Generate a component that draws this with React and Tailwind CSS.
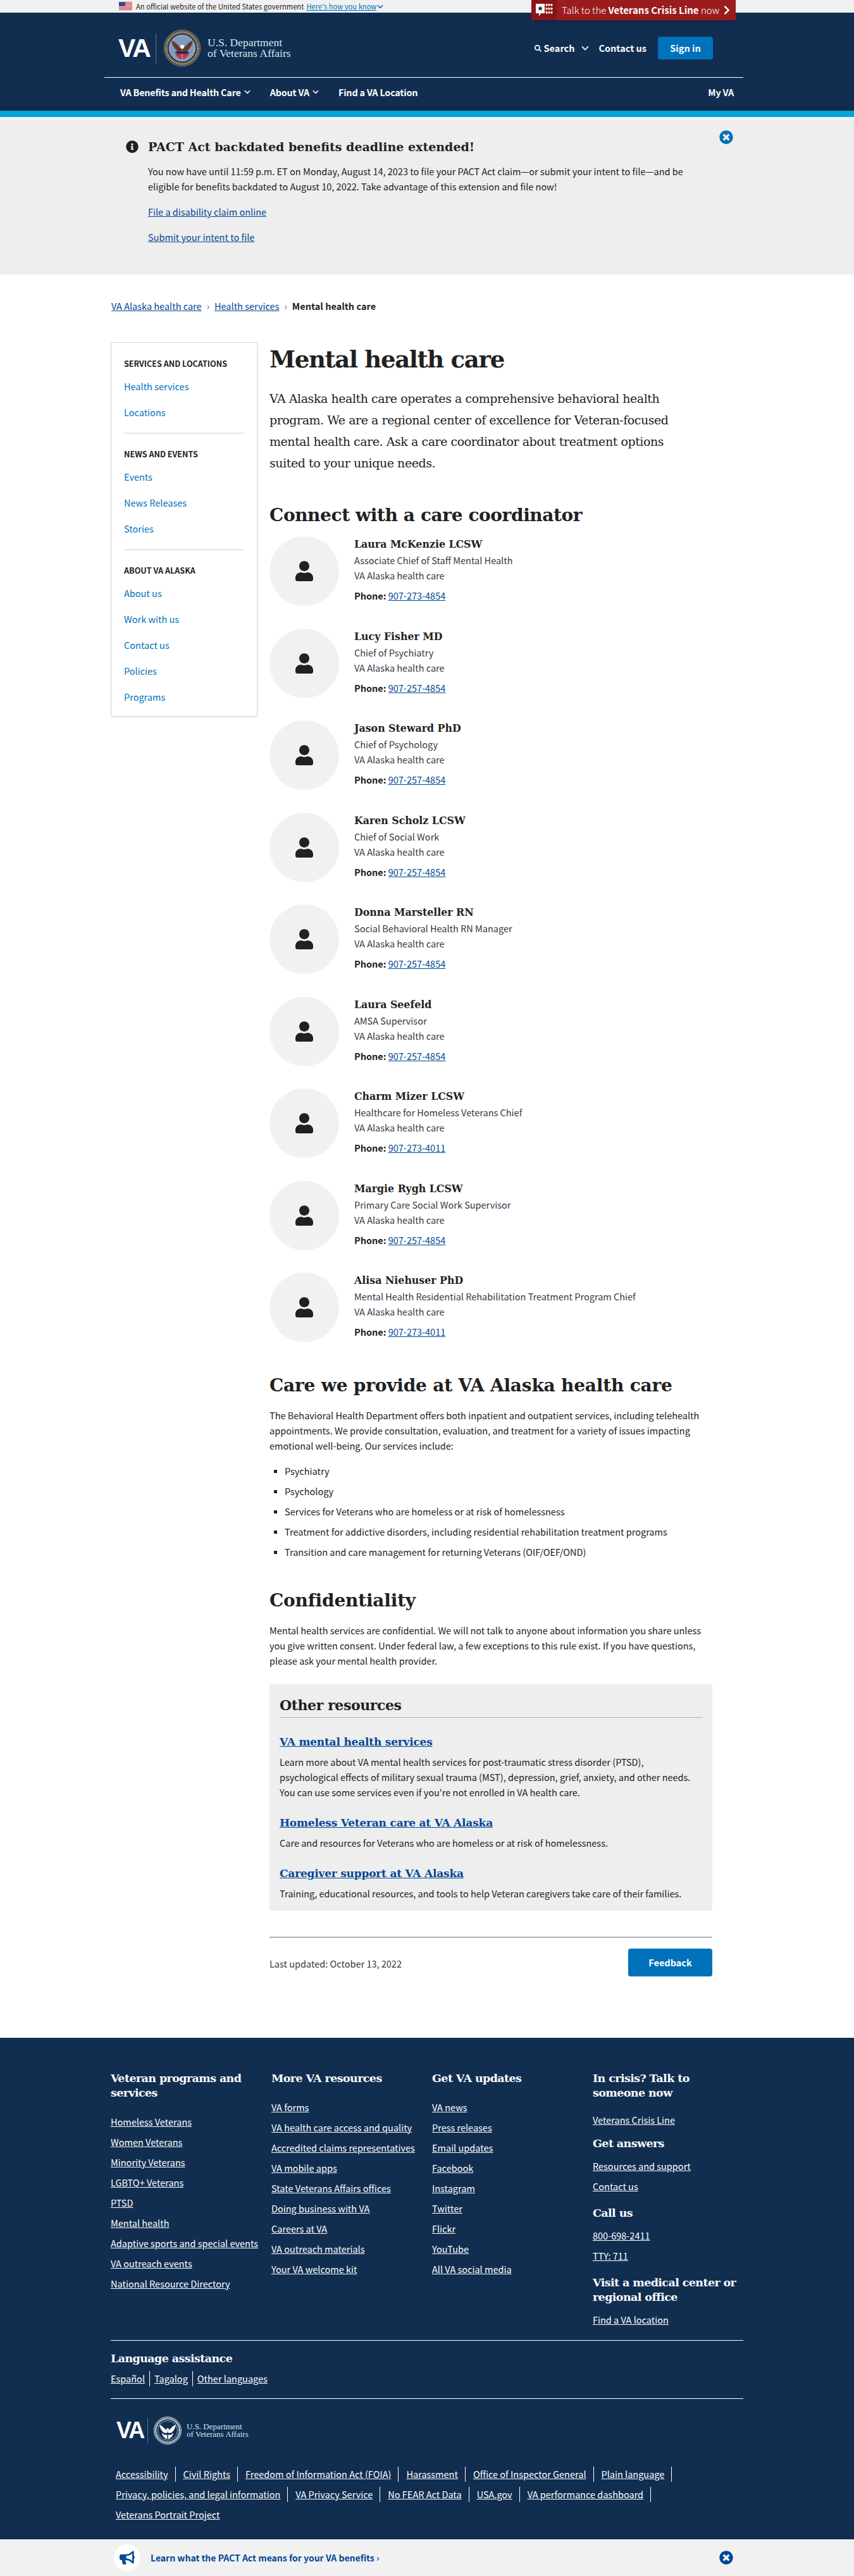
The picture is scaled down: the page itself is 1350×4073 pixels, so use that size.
import React from 'react';
import { FaUser, FaBullhorn, FaInfoCircle, FaTimesCircle, FaChevronRight, FaSearch } from 'react-icons/fa';

const sans = 'font-["Noto_Sans_CJK_SC","Source_Sans_Pro",Lato,sans-serif]';
const slab = 'font-["DejaVu_Serif",serif]';

const coordinators = [
  ['Laura McKenzie LCSW', 'Associate Chief of Staff Mental Health', '907-273-4854'],
  ['Lucy Fisher MD', 'Chief of Psychiatry', '907-257-4854'],
  ['Jason Steward PhD', 'Chief of Psychology', '907-257-4854'],
  ['Karen Scholz LCSW', 'Chief of Social Work', '907-257-4854'],
  ['Donna Marsteller RN', 'Social Behavioral Health RN Manager', '907-257-4854'],
  ['Laura Seefeld', 'AMSA Supervisor', '907-257-4854'],
  ['Charm Mizer LCSW', 'Healthcare for Homeless Veterans Chief', '907-273-4011'],
  ['Margie Rygh LCSW', 'Primary Care Social Work Supervisor', '907-257-4854'],
  ['Alisa Niehuser PhD', 'Mental Health Residential Rehabilitation Treatment Program Chief', '907-273-4011'],
];

const sideNav = [
  ['SERVICES AND LOCATIONS', ['Health services', 'Locations']],
  ['NEWS AND EVENTS', ['Events', 'News Releases', 'Stories']],
  ['ABOUT VA ALASKA', ['About us', 'Work with us', 'Contact us', 'Policies', 'Programs']],
];

const footerCols = [
  ['Veteran programs and services', ['Homeless Veterans', 'Women Veterans', 'Minority Veterans', 'LGBTQ+ Veterans', 'PTSD', 'Mental health', 'Adaptive sports and special events', 'VA outreach events', 'National Resource Directory']],
  ['More VA resources', ['VA forms', 'VA health care access and quality', 'Accredited claims representatives', 'VA mobile apps', 'State Veterans Affairs offices', 'Doing business with VA', 'Careers at VA', 'VA outreach materials', 'Your VA welcome kit']],
  ['Get VA updates', ['VA news', 'Press releases', 'Email updates', 'Facebook', 'Instagram', 'Twitter', 'Flickr', 'YouTube', 'All VA social media']],
];

const legalRows = [
  ['Accessibility', 'Civil Rights', 'Freedom of Information Act (FOIA)', 'Harassment', 'Office of Inspector General', 'Plain language'],
  ['Privacy, policies, and legal information', 'VA Privacy Service', 'No FEAR Act Data', 'USA.gov', 'VA performance dashboard'],
];

function Chevron({ className }) {
  return (
    <svg viewBox="0 0 12 8" fill="none" stroke="currentColor" strokeWidth="2" className={className}>
      <path d="M1 1.5 L6 6.5 L11 1.5" />
    </svg>
  );
}

function Flag() {
  return (
    <svg width="21" height="14" viewBox="0 0 21 14">
      <rect width="21" height="14" fill="#fff" />
      {[0, 2, 4, 6, 8, 10, 12].map((y) => <rect key={y} y={y} width="21" height="1.1" fill="#c8343f" />)}
      <rect width="10" height="7" fill="#3c4a8c" />
    </svg>
  );
}

function Seal({ color, size }) {
  const mono = color === 'mono';
  return (
    <svg width={size} height={size} viewBox="0 0 58 58" className="shrink-0">
      <circle cx="29" cy="29" r="28.5" fill={mono ? '#112e51' : '#1d2f55'} stroke={mono ? '#fff' : '#b08d4f'} strokeWidth="1" />
      <circle cx="29" cy="29" r="25" fill="none" stroke={mono ? '#fff' : '#c9a968'} strokeWidth="4" strokeDasharray="1.5 1" />
      <circle cx="29" cy="29" r="20.5" fill={mono ? '#112e51' : '#7f9cc0'} stroke={mono ? '#fff' : '#e8e0c8'} strokeWidth="0.8" />
      <path d="M29 31 C24 27 19 19 12 17 C13 25 18 33 27 37 Z" fill={mono ? '#fff' : '#6b3a22'} />
      <path d="M29 31 C34 27 39 19 46 17 C45 25 40 33 31 37 Z" fill={mono ? '#fff' : '#6b3a22'} />
      <circle cx="29" cy="27" r="3" fill="#fff" />
      <path d="M17 35 L28 35 L28 47 C23 46 19 41 17 35 Z" fill={mono ? '#fff' : '#c8343f'} />
      <path d="M41 35 L30 35 L30 47 C35 46 39 41 41 35 Z" fill={mono ? '#fff' : '#c8343f'} />
      <path d="M19 34 L39 34 L37 38 L21 38 Z" fill={mono ? '#112e51' : '#1d2f55'} />
    </svg>
  );
}

function VaLogo({ small }) {
  return (
    <div className="flex items-center">
      <span className={`${small ? 'text-[36px] w-[43px] mr-[6px]' : 'text-[41px] w-[48px] mr-[11px]'} font-["Liberation_Sans",sans-serif] font-bold leading-none tracking-[-2px] text-white`}>VA</span>
      <span className={`${small ? 'h-[40px] mr-[9px]' : 'h-[47px] mr-[12px]'} w-px bg-[#5a7392]`} />
      <Seal color={small ? 'mono' : 'full'} size={small ? 44 : 58} />
      <div className={`${small ? 'ml-[8px] text-[13px] leading-[12px]' : 'ml-[11px] text-[17.5px] leading-[17px]'} font-["Liberation_Serif",serif] text-[#dce4ef]`}>
        <div>U.S. Department</div>
        <div>of Veterans Affairs</div>
      </div>
    </div>
  );
}

function Coordinator({ person }) {
  const [name, title, phone] = person;
  return (
    <div className="flex h-[145.5px]">
      <div className="flex size-[110px] shrink-0 items-center justify-center rounded-full bg-[#f1f1f1]">
        <FaUser className="size-[32px] text-[#212121]" />
      </div>
      <div className="ml-[24px] pt-[1px]">
        <div className={`${slab} text-[15.8px] font-bold leading-[24px] text-[#212121]`}>{name}</div>
        <div className="mt-[1px] text-[14.5px] leading-[24px] text-[#323a45]">{title}</div>
        <div className="text-[14.5px] leading-[24px] text-[#323a45]">VA Alaska health care</div>
        <div className="mt-[8px] text-[14.5px] leading-[24px] text-[#212121]">
          <b>Phone:</b> <a className="text-[#004795] underline">{phone}</a>
        </div>
      </div>
    </div>
  );
}

function FooterLink({ children }) {
  return <a className="block h-[32px] text-[14.5px] leading-[24px] text-white underline whitespace-nowrap">{children}</a>;
}

function FooterHeading({ children, className = '' }) {
  return <h4 className={`${slab} text-[17.5px] font-bold leading-[23px] tracking-[-0.6px] text-white ${className}`}>{children}</h4>;
}

function Resource({ title, children, className = '' }) {
  return (
    <div className={className}>
      <a className={`${slab} block text-[17px] font-bold leading-[24px] tracking-[-0.2px] text-[#004795] underline`}>{title}</a>
      <p className="mt-[8px] text-[14.5px] leading-[24px] text-[#212121]">{children}</p>
    </div>
  );
}

export default function App() {
  return (
    <div className={`${sans} relative min-h-[4073px] w-full overflow-hidden bg-white text-[#212121]`}>
      {/* official site banner */}
      <div className="flex h-[20px] items-center bg-[#f1f1f1] pl-[188px] text-[11.2px] text-[#212121]">
        <Flag />
        <span className="ml-[6px]">An official website of the United States government</span>
        <a className="ml-[4px] text-[#0071bb] underline">Here's how you know</a>
        <Chevron className="ml-[1px] w-[10px] text-[#0071bb]" />
      </div>

      {/* crisis line tab */}
      <div className="absolute left-[840px] top-0 z-10 flex h-[32px] w-[323px] items-center bg-[#9a1c1f] text-white shadow-md">
        <div className="flex h-full w-[40px] items-center justify-center bg-[#8a1418]">
          <svg width="28" height="26" viewBox="0 0 28 26">
            <path d="M1 3h14v15h-6l-3 5v-5H1z" fill="#fff" />
            <path d="M8 6l1.2 3h3l-2.4 2 .9 3L8 12.2 5.3 14l.9-3-2.4-2h3z" fill="#212121" />
            {[3, 9, 15].map((y) => [18, 22, 26].map((x) => <rect key={`${x}${y}`} x={x - 1.5} y={y} width="3" height="3.5" rx="1" fill="#fff" />))}
          </svg>
        </div>
        <span className="ml-[8px] whitespace-nowrap text-[15px] font-light">Talk to the <b className="font-bold">Veterans Crisis Line</b> now</span>
        <FaChevronRight className="absolute left-[301px] top-[8px] size-[16px]" />
      </div>

      {/* header */}
      <header className="h-[148px] bg-[#112e51]">
        <div className="ml-[165px] w-[1010px]">
          <div className="flex h-[103px] items-center justify-between border-b border-white pb-[11px] pl-[22px] pr-[48px] pt-[21px]">
            <VaLogo />
            <div className="flex items-center text-[14.5px] font-bold text-white">
              <FaSearch className="size-[11px]" />
              <span className="ml-[4px]">Search</span>
              <Chevron className="ml-[11px] w-[12px] text-[#cfe2f3]" />
              <span className="ml-[15px]">Contact us</span>
              <button className="ml-[18px] h-[36px] w-[87px] rounded-[4px] bg-[#0071bb] font-bold text-white">Sign in</button>
            </div>
          </div>
          <nav className="flex h-[45px] items-center pl-[25px] pr-[15px] text-[14.4px] font-bold tracking-[-0.2px] text-white">
            <span>VA Benefits and Health Care</span>
            <Chevron className="ml-[5px] w-[10px]" />
            <span className="ml-[31px]">About VA</span>
            <Chevron className="ml-[5px] w-[10px]" />
            <span className="ml-[31px]">Find a VA Location</span>
            <span className="ml-auto">My VA</span>
          </nav>
        </div>
      </header>
      <div className="h-[7px] bg-[#0f2a4a]" />
      <div className="h-[10px] bg-[#02a6d6]" />
      <div className="h-[5px] bg-[#f5f5f5]" />

      {/* PACT banner */}
      <section className="relative h-[244px] bg-[#eeeeee] pl-[199px] pt-[29px]">
        <FaTimesCircle className="absolute left-[1137px] top-[16px] size-[22px] text-[#0071bb]" />
        <div className="flex items-center">
          <FaInfoCircle className="size-[20px] text-[#212121]" />
          <h3 className={`${slab} ml-[15px] text-[19px] font-bold leading-[26px] text-[#212121]`}>PACT Act backdated benefits deadline extended!</h3>
        </div>
        <div className="ml-[35px] w-[860px] text-[14.5px]">
          <p className="mt-[14px] leading-[24px]">You now have until 11:59 p.m. ET on Monday, August 14, 2023 to file your PACT Act claim—or submit your intent to file—and be eligible for benefits backdated to August 10, 2022. Take advantage of this extension and file now!</p>
          <a className="mt-[16px] block leading-[24px] text-[#004795] underline">File a disability claim online</a>
          <a className="mt-[16px] block leading-[24px] text-[#004795] underline">Submit your intent to file</a>
        </div>
      </section>

      {/* breadcrumb */}
      <div className="mt-[38px] flex h-[24px] items-center pl-[176px] text-[14.5px] leading-[24px]">
        <a className="text-[#004795] underline">VA Alaska health care</a>
        <span className="mx-[8px] text-[#5b616b]">›</span>
        <a className="text-[#004795] underline">Health services</a>
        <span className="mx-[8px] text-[#5b616b]">›</span>
        <b>Mental health care</b>
      </div>

      {/* page body */}
      <div className="ml-[175px] mt-[45px] flex items-start">
        <aside className="h-[592px] w-[232px] shrink-0 rounded-[3px] border border-[#d6d7d9] px-[20px] pt-[21px] shadow-sm">
          {sideNav.map(([heading, links], i) => (
            <div key={heading} className={i < 2 ? 'mb-[20px] border-b-2 border-[#e4e4e4] pb-[3px]' : ''}>
              <h4 className="h-[24px] text-[12.6px] font-bold leading-[24px] text-[#212121]">{heading}</h4>
              <div className="mt-[12px] flex flex-col">
                {links.map((l) => <a key={l} className="block h-[41px] text-[14.5px] leading-[24px] text-[#0071bb]">{l}</a>)}
              </div>
            </div>
          ))}
        </aside>

        <main className="ml-[19px] w-[700px]">
          <h1 className={`${slab} text-[37px] font-bold leading-[54px] tracking-[-1.3px] text-[#212121]`}>Mental health care</h1>
          <p className={`${slab} mt-[18px] w-[660px] text-[19px] font-normal leading-[34px] tracking-[-0.45px] text-[#212121]`}>
            VA Alaska health care operates a comprehensive behavioral health program. We are a regional center of excellence for Veteran-focused mental health care. Ask a care coordinator about treatment options suited to your unique needs.
          </p>
          <h2 className={`${slab} mt-[46px] text-[28px] font-bold leading-[40px] tracking-[-0.4px] text-[#212121]`}>Connect with a care coordinator</h2>
          <div className="mt-[13px]">
            {coordinators.map((p) => <Coordinator key={p[0]} person={p} />)}
          </div>

          <h2 className={`${slab} mt-[13px] text-[28px] font-bold leading-[40px] tracking-[-0.2px] text-[#212121]`}>Care we provide at VA Alaska health care</h2>
          <p className="mt-[15px] text-[14.5px] leading-[24px] text-[#212121]">The Behavioral Health Department offers both inpatient and outpatient services, including telehealth appointments. We provide consultation, evaluation, and treatment for a variety of issues impacting emotional well-being. Our services include:</p>
          <ul className="mt-[16px] text-[14.5px] leading-[24px]">
            {['Psychiatry', 'Psychology', 'Services for Veterans who are homeless or at risk of homelessness', 'Treatment for addictive disorders, including residential rehabilitation treatment programs', 'Transition and care management for returning Veterans (OIF/OEF/OND)'].map((item) => (
              <li key={item} className="flex h-[32px] items-start pl-[7px]">
                <span className="mt-[10px] size-[5px] shrink-0 bg-[#212121]" />
                <span className="ml-[12px]">{item}</span>
              </li>
            ))}
          </ul>
          <h2 className={`${slab} mt-[37px] text-[28px] font-bold leading-[40px] tracking-[-0.2px] text-[#212121]`}>Confidentiality</h2>
          <p className="mt-[15px] text-[14.5px] leading-[24px] text-[#212121]">Mental health services are confidential. We will not talk to anyone about information you share unless you give written consent. Under federal law, a few exceptions to this rule exist. If you have questions, please ask your mental health provider.</p>

          <section className="mt-[25px] h-[358px] bg-[#eeeeee] px-[16px] pt-[17px]">
            <h3 className={`${slab} border-b border-[#aeb0b5] pb-[3px] text-[22px] font-bold leading-[32px] tracking-[-0.4px] text-[#212121]`}>Other resources</h3>
            <Resource title="VA mental health services" className="mt-[26px]">Learn more about VA mental health services for post-traumatic stress disorder (PTSD), psychological effects of military sexual trauma (MST), depression, grief, anxiety, and other needs. You can use some services even if you're not enrolled in VA health care.</Resource>
            <Resource title="Homeless Veteran care at VA Alaska" className="mt-[24px]">Care and resources for Veterans who are homeless or at risk of homelessness.</Resource>
            <Resource title="Caregiver support at VA Alaska" className="mt-[24px]">Training, educational resources, and tools to help Veteran caregivers take care of their families.</Resource>
          </section>

          <div className="mt-[41px] flex items-center justify-between border-t-2 border-[#aeb0b5] pt-[17px]">
            <span className="mt-[4px] text-[14.5px] text-[#323a45]">Last updated: October 13, 2022</span>
            <button className="h-[44px] w-[133px] rounded-[4px] bg-[#0071bb] text-[14.5px] font-bold text-white">Feedback</button>
          </div>
        </main>
      </div>

      {/* footer */}
      <footer className="absolute bottom-[58px] left-0 h-[793px] w-full bg-[#112e51] pl-[175px] pt-[53px] text-white">
        <div className="flex h-[426px] w-[1000px] border-b border-white">
          {footerCols.map(([heading, links]) => (
            <div key={heading} className="w-[254px]">
              <FooterHeading className="w-[225px]">{heading}</FooterHeading>
              <div className="mt-[22px]">
                {links.map((l) => <FooterLink key={l}>{l}</FooterLink>)}
              </div>
            </div>
          ))}
          <div className="w-[238px]">
            <FooterHeading className="w-[225px]">In crisis? Talk to someone now</FooterHeading>
            <div className="mt-[19px]"><FooterLink>Veterans Crisis Line</FooterLink></div>
            <FooterHeading className="mt-[6px]">Get answers</FooterHeading>
            <div className="mt-[12px]"><FooterLink>Resources and support</FooterLink><FooterLink>Contact us</FooterLink></div>
            <FooterHeading className="mt-[11px]">Call us</FooterHeading>
            <div className="mt-[12px]"><FooterLink>800-698-2411</FooterLink><FooterLink>TTY: 711</FooterLink></div>
            <FooterHeading className="mt-[11px]">Visit a medical center or regional office</FooterHeading>
            <div className="mt-[12px]"><FooterLink>Find a VA location</FooterLink></div>
          </div>
        </div>
        <div className="h-[92px] w-[1000px] border-b border-white pt-[17px]">
          <FooterHeading>Language assistance</FooterHeading>
          <div className="mt-[8px] flex text-[14.5px] leading-[24px]">
            {['Español', 'Tagalog', 'Other languages'].map((l, i) => (
              <span key={l} className={i ? 'ml-[7px] border-l border-white pl-[7px]' : ''}><a className="underline">{l}</a></span>
            ))}
          </div>
        </div>
        <div className="ml-[9px] mt-[28px]"><VaLogo small /></div>
        <div className="ml-[8px] mt-[35px] text-[14.5px]">
          {legalRows.map((row) => (
            <div key={row[0]} className="flex h-[32px] items-start">
              {row.map((l) => (
                <span key={l} className="mr-[12px] flex h-[24px] items-center border-r border-white pr-[11px] leading-[24px]"><a className="underline">{l}</a></span>
              ))}
            </div>
          ))}
          <a className="block leading-[24px] underline">Veterans Portrait Project</a>
        </div>
      </footer>

      {/* promo bar */}
      <div className="absolute bottom-0 left-0 flex h-[58px] w-full items-center bg-[#f1f1f1] pl-[180px]">
        <div className="flex size-[42px] items-center justify-center rounded-full bg-white">
          <FaBullhorn className="size-[24px] text-[#0b4a96]" />
        </div>
        <a className="ml-[16px] text-[14px] font-bold text-[#004795]">Learn what the PACT Act means for your VA benefits ›</a>
        <FaTimesCircle className="absolute left-[1137px] top-[18px] size-[22px] text-[#004795]" />
      </div>
    </div>
  );
}
